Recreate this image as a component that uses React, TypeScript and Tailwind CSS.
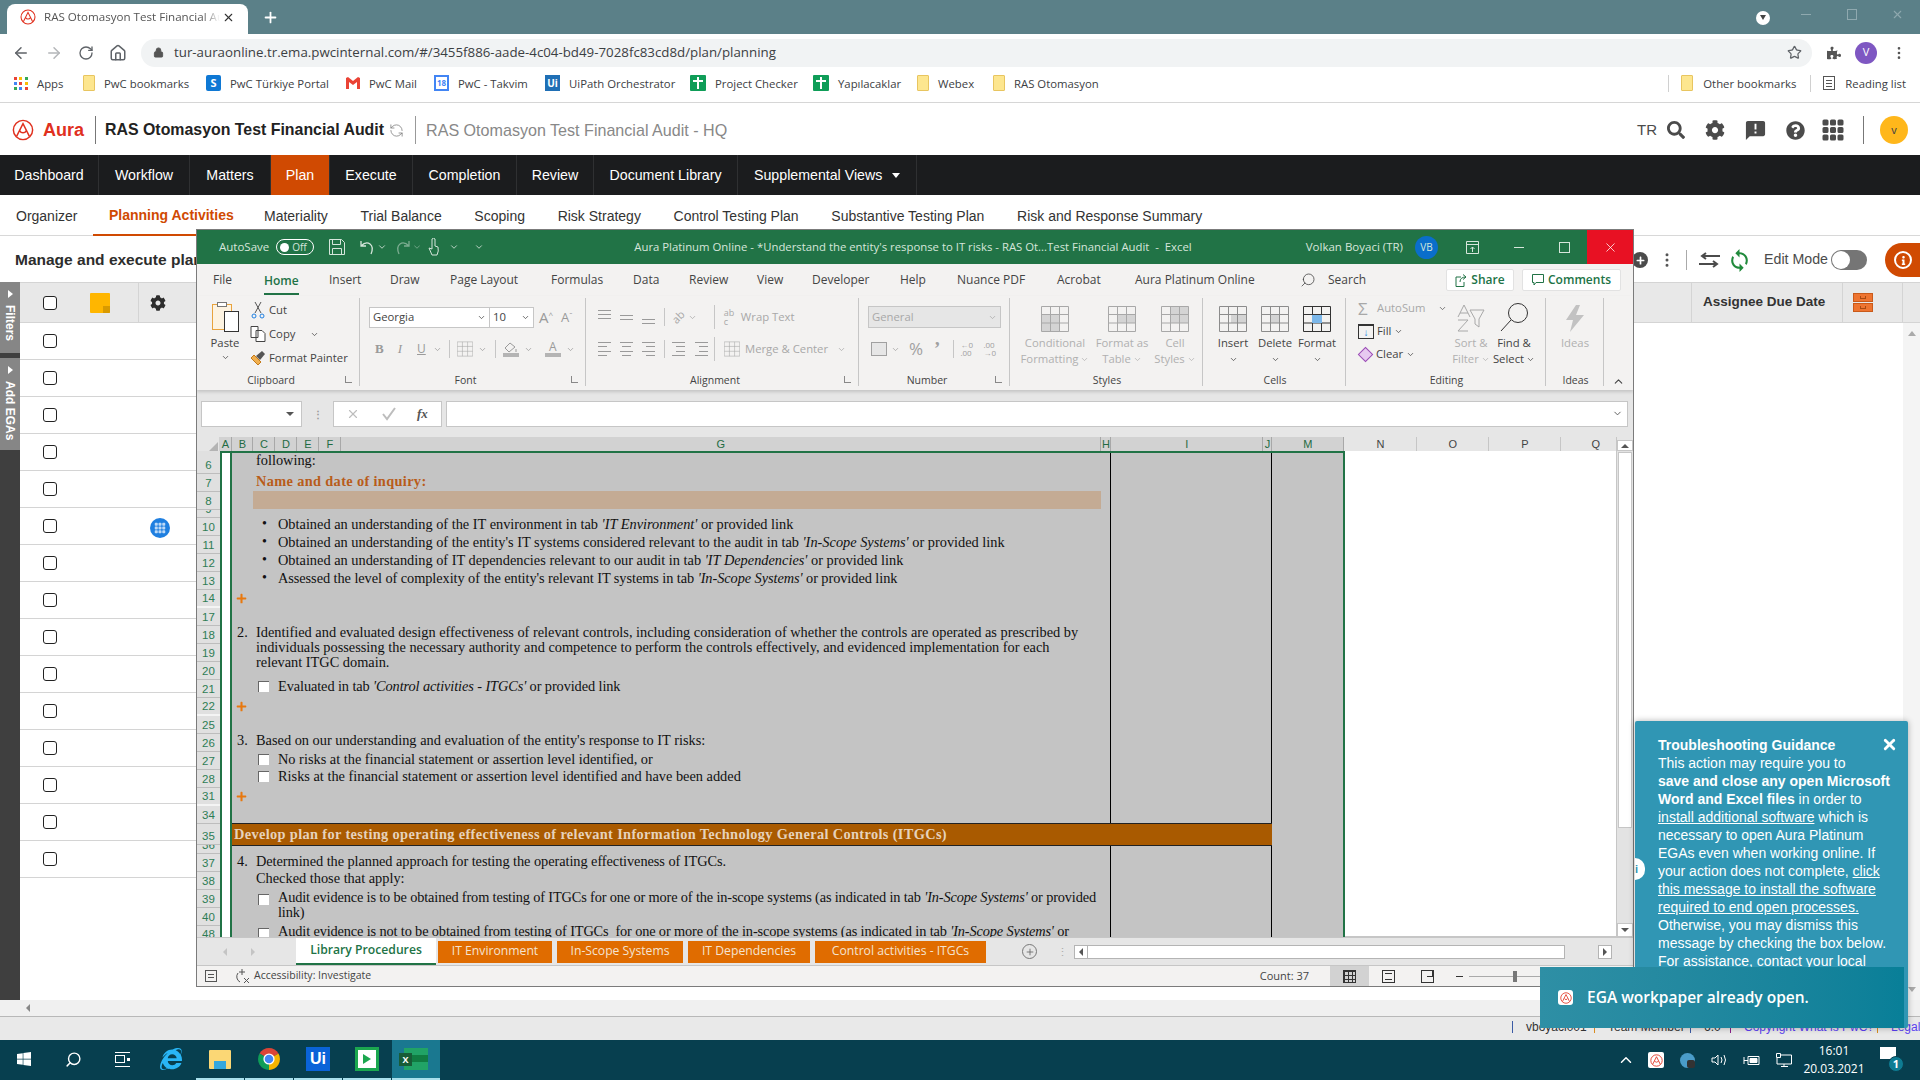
import {
  ArrowLeft,
  ArrowRight,
  ChevronDown,
  ChevronUp,
  Home,
  Lock,
  MoreVertical,
  Plus,
  RefreshCcw,
  RotateCw,
  Search,
  Star,
  X,
} from "lucide-react";
import { BsGrid3X3GapFill } from "react-icons/bs";
import { FaCog, FaInfo, FaInternetExplorer, FaPlus, FaPuzzlePiece, FaQuestionCircle, FaSearch, FaWindows } from "react-icons/fa";
import { MdAnnouncement, MdSync } from "react-icons/md";

function AuraLogo({ size = 16, color = "#e0301e" }: { size?: number; color?: string }) {
  return (
    <svg width={size} height={size} viewBox="0 0 24 24" fill="none" stroke={color} strokeWidth="1.6">
      <circle cx="12" cy="12" r="10.5" />
      <path d="M5 19 12 5l7 14M8.5 13a4 4 0 0 0 7 0" />
    </svg>
  );
}

function Folder() {
  return <div className="w-[12px] h-[16px] bg-[#fde68f] border border-[#e8c560] rounded-[1px]" />;
}

function ChromeIcon() {
  return (
    <svg width="24" height="24" viewBox="0 0 24 24">
      <path d="M12 12 2.5 6.5A11 11 0 0 1 21.5 6.5Z" fill="#db4437" />
      <path d="M12 12 21.5 6.5A11 11 0 0 1 12 23Z" fill="#f4b400" />
      <path d="M12 12 12 23A11 11 0 0 1 2.5 6.5Z" fill="#0f9d58" />
      <circle cx="12" cy="12" r="5.6" fill="#fff" />
      <circle cx="12" cy="12" r="4.3" fill="#4285f4" />
    </svg>
  );
}

function BrowserTabs() {
  return (
    <div className="h-[34px] bg-[#5b8088] flex items-end relative">
      <div className="ml-[7px] w-[241px] h-[30px] bg-white rounded-t-lg flex items-center pl-[13px] pr-[9px] pb-[4px]">
        <AuraLogo size={16} />
        <span className="ml-[8px] w-[176px] overflow-hidden whitespace-nowrap text-[11.6px] text-[#555] [mask-image:linear-gradient(90deg,#000_90%,transparent)]">
          RAS Otomasyon Test Financial Audit
        </span>
        <X size={13} className="ml-[2px] text-[#333]" />
      </div>
      <div className="ml-[14px] h-[30px] flex items-center pb-[4px]">
        <Plus size={17} strokeWidth={2.5} className="text-white" />
      </div>
      <div className="ml-auto h-[34px] flex items-center">
        <div className="w-[14px] h-[14px] rounded-full bg-white flex items-center justify-center mt-[1px]">
          <div className="w-0 h-0 border-x-[3.5px] border-x-transparent border-t-[5px] border-t-[#444]" />
        </div>
        <div className="ml-[31px] w-[10px] h-px bg-[#8fa9af] mb-[6px]" />
        <div className="ml-[36px] w-[10px] h-[11px] border border-[#8fa9af] mb-[6px]" />
        <X size={13} className="ml-[34px] mr-[16px] mb-[6px] text-[#8fa9af]" />
      </div>
    </div>
  );
}

function AddressBar() {
  return (
    <div className="h-[37px] bg-white flex items-center">
      <div className="flex items-center pl-[12px] text-[#5f6368]">
        <ArrowLeft size={18} />
        <ArrowRight size={18} className="ml-[15px] text-[#b4b6b9]" />
        <RotateCw size={16} className="ml-[15px]" />
        <Home size={18} className="ml-[15px]" />
      </div>
      <div className="ml-[14px] w-[1671px] h-[28px] rounded-full bg-[#f1f3f4] flex items-center pl-[12px] pr-[10px]">
        <Lock size={11} className="text-[#555]" fill="#555" />
        <span className="ml-[10px] text-[13.3px] text-[#3c4043] whitespace-nowrap">
          tur-auraonline.tr.ema.pwcinternal.com/#/3455f886-aade-4c04-bd49-7028fc83cd8d/plan/planning
        </span>
        <Star size={15} className="ml-auto text-[#5f6368]" />
      </div>
      <FaPuzzlePiece size={14} className="ml-[15px] text-[#555]" />
      <div className="ml-[14px] w-[22px] h-[22px] rounded-full bg-[#7e57c2] text-white text-[11px] flex items-center justify-center">V</div>
      <MoreVertical size={16} className="ml-[14px] text-[#555]" />
    </div>
  );
}

function BookmarkIcon({ kind }: { kind: string }) {
  if (kind === "apps") {
    const colors = ["#ea4335", "#fbbc05", "#34a853", "#4285f4", "#ea4335", "#fbbc05", "#34a853", "#4285f4", "#ea4335"];
    return (
      <div className="w-[14px] grid grid-cols-3 gap-[2px]">
        {colors.map((c, i) => (
          <div key={i} className="w-[3px] h-[3px]" style={{ background: c }} />
        ))}
      </div>
    );
  }
  if (kind === "folder") return <Folder />;
  if (kind === "sp")
    return <div className="w-[15px] h-[16px] bg-[#0f78d4] rounded-[2px] text-white text-[11px] font-bold leading-[16px] text-center">S</div>;
  if (kind === "gmail")
    return (
      <svg width="14" height="12" viewBox="0 0 14 12">
        <path d="M0 1v11h3V5l4 3 4-3v7h3V1l-2-1-5 4-5-4Z" fill="#ea4335" />
      </svg>
    );
  if (kind === "cal")
    return <div className="w-[15px] h-[16px] bg-white border-2 border-[#4285f4] text-[#4285f4] text-[8px] font-bold leading-[12px] text-center">18</div>;
  if (kind === "ui")
    return <div className="w-[15px] h-[16px] bg-[#1f6fb5] text-white text-[10px] font-bold leading-[16px] text-center">Ui</div>;
  return (
    <div className="w-[16px] h-[16px] bg-[#0f9d58] rounded-[1px] relative flex justify-center">
      <div className="w-[2px] h-[12px] bg-white mt-[2px]" />
      <div className="absolute top-[5px] left-[3px] w-[10px] h-[2px] bg-white" />
    </div>
  );
}

const bookmarks = [
  { kind: "apps", label: "Apps", w: "w-[69px]" },
  { kind: "folder", label: "PwC bookmarks", w: "w-[123px]" },
  { kind: "sp", label: "PwC Türkiye Portal", w: "w-[140px]" },
  { kind: "gmail", label: "PwC Mail", w: "w-[88px]" },
  { kind: "cal", label: "PwC - Takvim", w: "w-[111px]" },
  { kind: "ui", label: "UiPath Orchestrator", w: "w-[145px]" },
  { kind: "plus", label: "Project Checker", w: "w-[123px]" },
  { kind: "plus", label: "Yapılacaklar", w: "w-[104px]" },
  { kind: "folder", label: "Webex", w: "w-[76px]" },
  { kind: "folder", label: "RAS Otomasyon", w: "w-[120px]" },
];

function BookmarksBar() {
  return (
    <div className="h-[32px] bg-white border-b border-[#d6d6d6] flex items-center pl-[14px] pb-[6px] text-[11.35px] text-[#3c4043]">
      {bookmarks.map((b) => (
        <div key={b.label} className={`${b.w} flex items-center gap-[9px] shrink-0`}>
          <BookmarkIcon kind={b.kind} />
          <span className="whitespace-nowrap">{b.label}</span>
        </div>
      ))}
      <div className="ml-auto flex items-center">
        <div className="w-px h-[17px] bg-[#d0d0d0] mr-[12px]" />
        <Folder />
        <span className="ml-[10px] w-[93px] whitespace-nowrap">Other bookmarks</span>
        <div className="w-px h-[17px] bg-[#d0d0d0] ml-[14px] mr-[12px]" />
        <div className="w-[12px] h-[14px] border border-[#555] flex flex-col justify-evenly px-[2px]">
          <div className="h-px bg-[#555]" />
          <div className="h-px bg-[#555]" />
          <div className="h-px bg-[#555]" />
        </div>
        <span className="ml-[10px] mr-[14px] whitespace-nowrap">Reading list</span>
      </div>
    </div>
  );
}

function AuraHeader() {
  return (
    <div className="h-[52px] bg-white flex items-center pt-[2px] font-['Liberation_Sans',sans-serif]">
      <div className="pl-[12px]">
        <AuraLogo size={22} />
      </div>
      <span className="ml-[9px] text-[18px] font-bold text-[#e0301e]">Aura</span>
      <div className="ml-[11px] w-px h-[28px] bg-[#777]" />
      <span className="ml-[9px] text-[15.9px] font-bold text-[#222] whitespace-nowrap">RAS Otomasyon Test Financial Audit</span>
      <RefreshCcw size={15} strokeWidth={1.2} className="ml-[5px] text-[#777]" />
      <div className="ml-[11px] w-px h-[28px] bg-[#999]" />
      <span className="ml-[10px] text-[16.1px] text-[#888] whitespace-nowrap">RAS Otomasyon Test Financial Audit - HQ</span>
      <div className="ml-auto flex items-center text-[#4b4b4b]">
        <span className="text-[15px]">TR</span>
        <FaSearch size={18} className="ml-[10px]" />
        <FaCog size={20} className="ml-[20px]" />
        <MdAnnouncement size={23} className="ml-[19px]" />
        <FaQuestionCircle size={19} className="ml-[19px]" />
        <BsGrid3X3GapFill size={24} className="ml-[16px]" />
        <div className="ml-[18px] w-px h-[28px] bg-[#777]" />
        <div className="ml-[16px] mr-[12px] w-[28px] h-[28px] rounded-full bg-[#ffb71b] text-[#444] text-[11px] flex items-center justify-center">v</div>
      </div>
    </div>
  );
}

const navItems = [
  { label: "Dashboard", w: "w-[99px]" },
  { label: "Workflow", w: "w-[91px]" },
  { label: "Matters", w: "w-[81px]" },
  { label: "Plan", w: "w-[59px]" },
  { label: "Execute", w: "w-[83px]" },
  { label: "Completion", w: "w-[104px]" },
  { label: "Review", w: "w-[77px]" },
  { label: "Document Library", w: "w-[144px]" },
];

function MainNav() {
  return (
    <div className="h-[40px] bg-[#1b1c1e] flex text-white text-[14.2px] font-['Liberation_Sans',sans-serif]">
      {navItems.map((n) => (
        <div
          key={n.label}
          className={`${n.w} flex items-center justify-center pt-[1px] border-r border-[#2f3032] ${n.label === "Plan" ? "bg-[#d04a02]" : ""}`}
        >
          {n.label}
        </div>
      ))}
      <div className="w-[179px] flex items-center pl-[16px] pt-[1px] border-r border-[#2f3032]">
        Supplemental Views
        <div className="ml-[10px] w-0 h-0 border-x-[4px] border-x-transparent border-t-[5px] border-t-white" />
      </div>
    </div>
  );
}

function SubNav() {
  const items = ["Materiality", "Trial Balance", "Scoping", "Risk Strategy", "Control Testing Plan", "Substantive Testing Plan", "Risk and Response Summary"];
  return (
    <div className="h-[41px] flex text-[14px] text-[#333] font-['Liberation_Sans',sans-serif] border-b border-[#d8d8d8]">
      <div className="pl-[16px] w-[93px] flex items-center pt-[2px]">Organizer</div>
      <div className="w-[171px] pl-[16px] flex items-center pt-[2px] font-bold text-[#d04a02] border-b-2 border-[#d04a02] h-[41px] whitespace-nowrap">
        Planning Activities
      </div>
      {items.map((i) => (
        <div key={i} className="mr-[32px] pr-[0.7px] flex items-center pt-[2px] whitespace-nowrap">
          {i}
        </div>
      ))}
    </div>
  );
}

function PageCheckbox() {
  return <div className="w-[14px] h-[14px] rounded-[3px] border border-[#222] bg-white" />;
}

function PageBody() {
  const rows = Array.from({ length: 15 }, (_, i) => i);
  return (
    <div className="h-[780px] flex flex-col font-['Liberation_Sans',sans-serif]">
      <div className="h-[46px] flex items-center shrink-0 pt-[2px]">
        <span className="pl-[15px] text-[15.5px] font-bold text-[#2d2d2d] whitespace-nowrap w-[196px]">Manage and execute planning activities</span>
        <div className="ml-auto flex items-center text-[#555]">
          <div className="w-[16px] h-[16px] rounded-full bg-[#4b4b4b] flex items-center justify-center">
            <FaPlus size={9} className="text-white" />
          </div>
          <MoreVertical size={18} className="ml-[10px]" />
          <div className="ml-[10px] w-px h-[20px] bg-[#aaa]" />
          <svg width="21" height="16" viewBox="0 0 21 16" className="ml-[12px]" fill="none" stroke="#4b4b4b" strokeWidth="2">
            <path d="M21 4H3m4-3L3 4l4 3M0 12h18m-4-3 4 3-4 3" />
          </svg>
          <MdSync size={25} className="ml-[7px] text-[#218a3c]" />
          <span className="ml-[12px] text-[14.2px] text-[#4b4b4b]">Edit Mode</span>
          <div className="ml-[3px] w-[36px] h-[20px] rounded-full bg-[#757575] flex items-center p-px">
            <div className="w-[18px] h-[18px] rounded-full bg-white" />
          </div>
          <div className="ml-[18px] w-[35px] h-[34px] rounded-l-full bg-[#d04a02] flex items-center pl-[9px]">
            <div className="w-[18px] h-[18px] rounded-full border-2 border-white flex items-center justify-center">
              <FaInfo size={9} className="text-white" />
            </div>
          </div>
        </div>
      </div>
      <div className="flex-1 flex min-h-0">
        <div className="w-[20px] bg-[#3f3f3f] flex flex-col text-white shrink-0">
          <div className="h-[71px] bg-[#868686] flex flex-col items-center pt-[8px]">
            <div className="w-0 h-0 border-y-[4px] border-y-transparent border-l-[5px] border-l-white" />
            <span className="mt-[7px] [writing-mode:vertical-rl] text-[12px] font-bold">Filters</span>
          </div>
          <div className="mt-[5px] h-[92px] bg-[#868686] flex flex-col items-center pt-[8px]">
            <div className="w-0 h-0 border-y-[4px] border-y-transparent border-l-[5px] border-l-white" />
            <span className="mt-[7px] [writing-mode:vertical-rl] text-[12px] font-bold whitespace-nowrap">Add EGAs</span>
          </div>
        </div>
        <div className="flex-1 flex flex-col min-w-0">
          <div className="h-[41px] bg-[#e8e8e8] border-y border-[#d4d4d4] flex items-center shrink-0">
            <div className="w-[118px] flex items-center pl-[23px]">
              <PageCheckbox />
              <div className="ml-[33px] w-[20px] h-[20px] bg-[#ffb600] rounded-[1px] relative overflow-hidden">
                <div className="absolute right-0 bottom-0 w-[7px] h-[7px] bg-[#d99a00]" />
              </div>
            </div>
            <div className="h-full border-l border-[#d4d4d4] pl-[11px] flex items-center">
              <FaCog size={16} className="text-[#2d2d2d]" />
            </div>
            <div className="ml-auto h-full w-[151px] border-l border-[#d4d4d4] flex items-center pl-[11px] text-[13.5px] font-bold text-[#333] whitespace-nowrap">
              Assignee Due Date
            </div>
            <div className="h-full w-[60px] border-l border-[#d4d4d4] flex flex-col gap-px justify-center pl-[10px]">
              <div className="w-[20px] h-[9px] bg-[#ee7430] border border-[#c95a1a] flex justify-center">
                <div className="w-[6px] h-[3px] mt-[2px] border-b border-x border-[#a84a12]" />
              </div>
              <div className="w-[20px] h-[9px] bg-[#ee7430] border border-[#c95a1a] flex justify-center">
                <div className="w-[6px] h-[3px] mt-[2px] border-b border-x border-[#a84a12]" />
              </div>
            </div>
            <div className="h-full w-[18px] border-l border-[#d4d4d4]" />
          </div>
          <div className="flex-1 flex min-h-0">
            <div className="w-[176px]">
              {rows.map((r) => (
                <div key={r} className="h-[37px] border-b border-[#d4d4d4] flex items-center pl-[23px] relative">
                  <PageCheckbox />
                  {r === 5 && (
                    <div className="absolute left-[130px] top-[10px] w-[20px] h-[20px] rounded-full bg-[#1f7fe0] flex items-center justify-center">
                      <BsGrid3X3GapFill size={12} className="text-[#bcd9f7]" />
                    </div>
                  )}
                </div>
              ))}
            </div>
            <div className="ml-auto w-[17px] bg-[#f4f4f4] flex flex-col justify-between items-center py-[8px]">
              <div className="w-0 h-0 border-x-[4px] border-x-transparent border-b-[5px] border-b-[#aaa]" />
              <div className="w-0 h-0 border-x-[4px] border-x-transparent border-t-[5px] border-t-[#aaa]" />
            </div>
          </div>
        </div>
      </div>
      <div className="h-[16px] bg-[#f0f0f0] flex items-center shrink-0 pl-[26px]">
        <div className="w-0 h-0 border-y-[4px] border-y-transparent border-r-[4px] border-r-[#888]" />
      </div>
    </div>
  );
}

function Footer() {
  const items = [
    { sep: "bg-[#3b5ba5]", text: "vboyaci001", w: "w-[82px]", color: "text-[#333]" },
    { sep: "bg-[#d98c20]", text: "Team Member", w: "w-[96px]", color: "text-[#333]" },
    { sep: "bg-[#3b5ba5]", text: "6.0", w: "w-[40px]", color: "text-[#333]" },
    { sep: "bg-[#8a1f8a]", text: "Copyright What is PwC?", w: "w-[147px]", color: "text-[#5b3ff0]" },
    { sep: "bg-[#d98c20]", text: "Legal", w: "w-[43px]", color: "text-[#5b3ff0]" },
  ];
  return (
    <div className="h-[24px] bg-[#e9e9e9] border-t border-[#b8b8b8] flex items-center justify-end text-[12px] font-['Liberation_Sans',sans-serif]">
      {items.map((f) => (
        <div key={f.text} className={`${f.w} flex items-center mb-[3px] whitespace-nowrap`}>
          <div className={`${f.sep} w-px h-[12px] mr-[13px] shrink-0`} />
          <span className={f.color}>{f.text}</span>
        </div>
      ))}
    </div>
  );
}

function TaskSlot({ active, line, children }: { active?: boolean; line?: boolean; children: React.ReactNode }) {
  return (
    <div
      className={`w-[48px] h-[40px] flex items-center justify-center mr-px border-b-2 ${active ? "bg-[#1a7890]" : ""} ${line ? "border-[#a9e0ec]" : "border-transparent"}`}
    >
      {children}
    </div>
  );
}

function Taskbar() {
  return (
    <div className="h-[40px] bg-[#073f4f] flex items-center text-white">
      <TaskSlot>
        <FaWindows size={16} />
      </TaskSlot>
      <TaskSlot>
        <Search size={17} className="-scale-x-100" />
      </TaskSlot>
      <TaskSlot>
        <div className="w-[15px] h-[15px] border-y border-white flex items-center justify-start">
          <div className="w-[10px] h-[8px] border border-white" />
          <div className="ml-[2px] w-[3px] h-[3px] bg-white" />
        </div>
      </TaskSlot>
      <TaskSlot>
        <FaInternetExplorer size={22} className="text-[#29b6f6]" />
      </TaskSlot>
      <TaskSlot line>
        <div className="w-[22px] h-[19px] bg-[#fbd775] rounded-[1px] flex items-end justify-center">
          <div className="w-[12px] h-[8px] bg-[#35a7dd]" />
        </div>
      </TaskSlot>
      <TaskSlot line>
        <ChromeIcon />
      </TaskSlot>
      <TaskSlot line>
        <div className="w-[24px] h-[24px] bg-[#0a63d8] text-white text-[16px] font-bold leading-[24px] text-center font-['Liberation_Sans',sans-serif]">Ui</div>
      </TaskSlot>
      <TaskSlot line>
        <div className="w-[24px] h-[24px] bg-[#1ba74f] flex items-center justify-center">
          <div className="w-[18px] h-[18px] bg-white flex items-center justify-center">
            <div className="w-0 h-0 border-y-[5px] border-y-transparent border-l-[8px] border-l-[#1ba74f]" />
          </div>
        </div>
      </TaskSlot>
      <TaskSlot active line>
        <div className="w-[24px] h-[22px] bg-[#21a366] relative">
          <div className="absolute left-[8px] top-[7px] w-[16px] h-[7px] bg-[#107c41]" />
          <div className="absolute -left-[5px] top-[5px] w-[13px] h-[13px] bg-[#185c37] text-white text-[9px] font-bold leading-[13px] text-center">X</div>
        </div>
      </TaskSlot>
      <div className="ml-auto flex items-center">
        <ChevronUp size={18} className="mr-[13px]" />
        <div className="w-[16px] h-[16px] bg-white rounded-[2px] flex items-center justify-center">
          <AuraLogo size={13} />
        </div>
        <div className="ml-[16px] w-[15px] h-[15px] rounded-full bg-[#4a9cc9] flex items-end justify-end">
          <div className="w-[8px] h-[8px] rounded-[2px] bg-[#333]" />
        </div>
        <svg width="17" height="14" viewBox="0 0 17 14" className="ml-[16px]" fill="none" stroke="#fff">
          <path d="M1 5h3l3-3v10L4 9H1ZM10 4q2 3 0 6M13 2q3 5 0 10" />
        </svg>
        <svg width="17" height="12" viewBox="0 0 17 12" className="ml-[15px]" fill="none" stroke="#fff">
          <path d="M5 2.500h11v8H5ZM5 6.500H1M1 3v7" />
          <path d="M7 4.500h7v4H7Z" fill="#fff" />
        </svg>
        <svg width="16" height="14" viewBox="0 0 16 14" className="ml-[16px]" fill="none" stroke="#fff">
          <path d="M.5.5h4v4h-4ZM5 2h10.5v9H1V5M8 11v2M5 13.500h7" />
        </svg>
        <div className="ml-[2px] w-[80px] flex flex-col items-center text-[12px] leading-[18px] font-['Open_Sans',sans-serif]">
          <span>16:01</span>
          <span>20.03.2021</span>
        </div>
        <div className="ml-[6px] mr-[17px] w-[23px] h-[28px] relative">
          <div className="absolute left-0 top-[1px] w-[16px] h-[12px] bg-white" />
          <div className="absolute left-[8px] top-[10px] w-[16px] h-[16px] rounded-full bg-[#0e7c93] border border-[#073f4f] text-[11px] font-bold leading-[14px] text-center">1</div>
        </div>
      </div>
    </div>
  );
}

/* ---------- Excel ---------- */

function TitleBar() {
  const t = "text-[#d6e6db]";
  return (
    <div className={`h-[34px] bg-[#217346] flex items-center text-[11.5px] ${t} shrink-0`}>
      <span className="ml-[22px]">AutoSave</span>
      <div className="ml-[7px] w-[38px] h-[16px] rounded-full border border-white flex items-center px-[3px] gap-[3px]">
        <div className="w-[9px] h-[9px] rounded-full bg-white" />
        <span className="text-[10px] leading-none">Off</span>
      </div>
      <svg width="16" height="16" viewBox="0 0 16 16" className="ml-[15px]" fill="none" stroke="#d6e6db">
        <path d="M.5.5h12l3 3v12H.5ZM3.500.5v5h8v-5M3.500 15.500v-6h9v6" />
      </svg>
      <svg width="15" height="15" viewBox="0 0 15 15" className="ml-[15px]" fill="none" stroke="#d6e6db" strokeWidth="1.3">
        <path d="M1 1v5h5M1 6q5-5 9-2t1 10" />
      </svg>
      <ChevronDown size={10} className="ml-[2px]" />
      <svg width="15" height="15" viewBox="0 0 15 15" className="ml-[8px] opacity-50" fill="none" stroke="#d6e6db" strokeWidth="1.3">
        <path d="M14 1v5H9M14 6Q9 1 5 4t-1 10" />
      </svg>
      <ChevronDown size={10} className="ml-[2px] opacity-50" />
      <svg width="13" height="18" viewBox="0 0 13 18" className="ml-[5px]" fill="none" stroke="#d6e6db">
        <path d="M5 1a2 2 0 0 1 3 0v7l3 1q1 4-1 8H5L2 10l3 1Z" />
      </svg>
      <ChevronDown size={10} className="ml-[9px]" />
      <ChevronDown size={10} className="ml-[15px]" />
      <span className="ml-[150px] whitespace-nowrap text-[11.35px]">
        Aura Platinum Online - *Understand the entity's response to IT risks - RAS Ot...Test Financial Audit&nbsp; -&nbsp; Excel
      </span>
      <div className="ml-auto flex items-center h-full">
        <span className="whitespace-nowrap">Volkan Boyaci (TR)</span>
        <div className="ml-[12px] w-[23px] h-[23px] rounded-full bg-[#0a6ecb] text-[10px] flex items-center justify-center">VB</div>
        <svg width="13" height="13" viewBox="0 0 13 13" className="ml-[28px]" fill="none" stroke="#d6e6db">
          <path d="M.5.5h12v12H.5ZM.5 3.500h12M6.500 11V6M4.500 8l2-2 2 2" />
        </svg>
        <div className="ml-[35px] w-[10px] h-px bg-[#d6e6db]" />
        <div className="ml-[35px] w-[11px] h-[11px] border border-[#d6e6db]" />
        <div className="ml-[17px] w-[46px] h-full bg-[#e81123] flex items-center justify-center">
          <X size={15} strokeWidth={1.2} className="text-white" />
        </div>
      </div>
    </div>
  );
}

const ribbonTabs = [
  { label: "File", w: "w-[51px]" },
  { label: "Home", w: "w-[65px]" },
  { label: "Insert", w: "w-[61px]" },
  { label: "Draw", w: "w-[60px]" },
  { label: "Page Layout", w: "w-[101px]" },
  { label: "Formulas", w: "w-[82px]" },
  { label: "Data", w: "w-[56px]" },
  { label: "Review", w: "w-[68px]" },
  { label: "View", w: "w-[55px]" },
  { label: "Developer", w: "w-[88px]" },
  { label: "Help", w: "w-[57px]" },
  { label: "Nuance PDF", w: "w-[100px]" },
  { label: "Acrobat", w: "w-[78px]" },
  { label: "Aura Platinum Online", w: "w-[165px]" },
];

function RibbonTabs() {
  return (
    <div className="h-[32px] flex items-center pl-[16px] text-[12px] text-[#444] shrink-0">
      {ribbonTabs.map((t) => (
        <div key={t.label} className={`${t.w} h-full flex items-center relative whitespace-nowrap`}>
          <span className={t.label === "Home" ? "font-semibold text-[#217346] border-b-[2px] border-[#217346] h-[26px] leading-[24px] mt-[3px]" : ""}>{t.label}</span>
        </div>
      ))}
      <Search size={16} strokeWidth={1.2} className="text-[#444] -scale-x-100" />
      <span className="ml-[12px]">Search</span>
      <div className="ml-auto mr-[12px] flex gap-[8px] text-[#217346] font-semibold">
        <div className="w-[68px] h-[22px] bg-white border border-[#e2e2e2] rounded-[2px] flex items-center justify-center gap-[4px]">
          <svg width="12" height="13" viewBox="0 0 12 13" fill="none" stroke="#217346">
            <path d="M6 3H1v9.500h8V8M5 8q0-5 6-5L8 .5M11 3 8 5.500" />
          </svg>
          Share
        </div>
        <div className="w-[99px] h-[22px] bg-white border border-[#e2e2e2] rounded-[2px] flex items-center justify-center gap-[4px]">
          <svg width="12" height="12" viewBox="0 0 12 12" fill="none" stroke="#217346">
            <path d="M.5.5h11v8H4L2 11V8.500H.5Z" />
          </svg>
          Comments
        </div>
      </div>
    </div>
  );
}

function Chev({ className = "" }: { className?: string }) {
  return <ChevronDown size={9} strokeWidth={2} className={className} />;
}

function Group({ w, label, launcher, children }: { w: string; label: string; launcher?: boolean; children: React.ReactNode }) {
  return (
    <div className={`${w} shrink-0 h-[88px] mt-[2px] border-r border-[#c6c6c6] flex flex-col`}>
      <div className="h-[76px]">{children}</div>
      <div className={`relative mt-[2px] text-center text-[10.5px] leading-[12px] text-[#444] ${launcher ? "pr-[14px]" : "pl-[2px]"}`}>
        {label}
        {launcher && <div className="absolute right-[7px] top-[2px] w-[7px] h-[7px] border-l border-b border-[#888]" />}
      </div>
    </div>
  );
}

function Lines({ widths, align = "items-start", justify = "justify-between" }: { widths: string[]; align?: string; justify?: string }) {
  return (
    <div className={`w-[13px] h-[14px] flex flex-col gap-[3px] ${align} ${justify}`}>
      {widths.map((w, i) => (
        <div key={i} className={`${w} h-px bg-[#9a9a9a]`} />
      ))}
    </div>
  );
}

function GridIcon({ tint, big, shade }: { tint?: string; big?: boolean; shade?: string }) {
  return (
    <svg width={big ? 28 : 16} height={big ? 26 : 16} viewBox="0 0 28 26" fill="none" stroke={tint ?? "#a8a8a8"}>
      {shade && <path d={shade} fill="#d4d4d4" stroke="none" />}
      <path d="M.5.5h27v25H.5ZM.5 8.500h27M.5 17h27M9.500.5v25M18.500.5v25" />
    </svg>
  );
}

function BigButton({ w, icon, lines, grey, chevLine }: { w: string; icon: React.ReactNode; lines: string[]; grey?: boolean; chevLine?: boolean }) {
  return (
    <div className={`${w} shrink-0 flex flex-col items-center pt-[6px] text-[11.3px] leading-[16px] ${grey ? "text-[#b0b0b0]" : "text-[#444]"}`}>
      <div className="h-[28px] flex items-end justify-center">{icon}</div>
      <div className="mt-[3px] whitespace-nowrap">{lines[0]}</div>
      <div className="whitespace-nowrap flex items-center gap-[2px] h-[16px]">
        {lines[1]}
        {chevLine && <Chev />}
      </div>
    </div>
  );
}

function Ribbon() {
  return (
    <div className="h-[94px] flex text-[11.3px] text-[#444] shrink-0 shadow-[0_2px_3px_rgba(0,0,0,0.15)] relative">
      <Group w="w-[163px]" label="Clipboard" launcher>
        <div className="flex">
          <div className="ml-[3px] w-[50px] flex flex-col items-center pt-[4px]">
            <div className="w-[27px] h-[30px] relative">
              <div className="absolute left-0 top-[2px] w-[20px] h-[26px] border border-[#e8a33d] bg-[#fdf3e1]" />
              <div className="absolute left-[5px] top-0 w-[10px] h-[5px] border border-[#777] bg-white" />
              <div className="absolute right-0 top-[9px] w-[15px] h-[21px] border border-[#333] bg-white" />
            </div>
            <span className="mt-[3px] leading-[16px]">Paste</span>
            <Chev className="mt-[2px]" />
          </div>
          <div className="flex flex-col">
            <div className="h-[24px] flex items-center">
              <svg width="16" height="18" viewBox="0 0 16 18" fill="none" stroke="#555">
                <path d="M5 1l6 11M11 1 5 12" />
                <circle cx="4" cy="15" r="2" stroke="#1f7fe0" />
                <circle cx="12" cy="15" r="2" stroke="#1f7fe0" />
              </svg>
              <span className="ml-[3px]">Cut</span>
            </div>
            <div className="h-[24px] flex items-center">
              <svg width="16" height="16" viewBox="0 0 16 16" fill="none" stroke="#444">
                <path d="M1 .5h7v11H1ZM6 4.500h6l3 3v8H6Z" fill="#fff" />
              </svg>
              <span className="ml-[3px]">Copy</span>
              <Chev className="ml-[15px]" />
            </div>
            <div className="h-[24px] flex items-center">
              <svg width="16" height="16" viewBox="0 0 16 16">
                <path d="M1 8l7 7 3-3-7-7Z" fill="#f0b050" stroke="#c47a1a" />
                <path d="M6 6l6-5 3 3-5 6Z" fill="#555" />
              </svg>
              <span className="ml-[3px] whitespace-nowrap">Format Painter</span>
            </div>
          </div>
        </div>
      </Group>
      <Group w="w-[226px]" label="Font" launcher>
        <div className="pl-[9px] pt-[9px] flex items-center h-[30px]">
          <div className="w-[121px] h-[21px] bg-white border border-[#c6c6c6] flex items-center pl-[3px] pr-[3px]">
            Georgia
            <Chev className="ml-auto" />
          </div>
          <div className="w-[44px] h-[21px] bg-white border border-l-0 border-[#c6c6c6] flex items-center pl-[3px] pr-[3px]">
            10
            <Chev className="ml-auto" />
          </div>
          <span className="ml-[5px] text-[15px] text-[#9a9a9a]">A</span>
          <span className="text-[8px] text-[#9a9a9a] mb-[6px]">^</span>
          <span className="ml-[8px] text-[13px] text-[#9a9a9a]">A</span>
          <span className="text-[8px] text-[#9a9a9a] mb-[6px]">ˇ</span>
        </div>
        <div className="mt-[10px] h-[22px] pl-[15px] flex items-center text-[#9a9a9a]">
          <span className="font-bold text-[13px] font-['Liberation_Serif',serif]">B</span>
          <span className="ml-[14px] italic text-[13px] font-['Liberation_Serif',serif]">I</span>
          <span className="ml-[15px] underline text-[12px]">U</span>
          <Chev className="ml-[7px]" />
          <div className="ml-[7px] w-px h-[18px] bg-[#c6c6c6]" />
          <div className="ml-[7px]">
            <GridIcon />
          </div>
          <Chev className="ml-[5px]" />
          <div className="ml-[8px] w-px h-[18px] bg-[#c6c6c6]" />
          <div className="ml-[7px] flex flex-col items-center">
            <svg width="14" height="11" viewBox="0 0 14 11" fill="none" stroke="#9a9a9a">
              <path d="M6 1 1 6l4 4 6-5ZM12 7v3" />
            </svg>
            <div className="w-[16px] h-[4px] bg-[#b4b4b4]" />
          </div>
          <Chev className="ml-[5px]" />
          <div className="ml-[12px] flex flex-col items-center leading-[12px]">
            <span className="text-[12px]">A</span>
            <div className="w-[16px] h-[4px] bg-[#b4b4b4]" />
          </div>
          <Chev className="ml-[5px]" />
        </div>
      </Group>
      <Group w="w-[273px]" label="Alignment" launcher>
        <div className="pl-[12px] pt-[8px] h-[30px] flex items-center text-[#a8a8a8]">
          <div className="flex gap-[9px]">
            <Lines widths={["w-[13px]", "w-[13px]", "w-[13px]"]} justify="justify-start" />
            <Lines widths={["w-[13px]", "w-[13px]"]} justify="justify-center" />
            <Lines widths={["w-[13px]", "w-[13px]"]} justify="justify-end" />
          </div>
          <div className="ml-[9px] w-px h-[18px] bg-[#c6c6c6]" />
          <span className="ml-[7px] text-[11px] -rotate-45 inline-block">ab</span>
          <Chev className="ml-[3px]" />
          <div className="ml-[17px] w-px h-[24px] bg-[#c6c6c6]" />
          <span className="ml-[9px] text-[9px] leading-[9px] w-[15px]">ab c</span>
          <span className="ml-[2px]">Wrap Text</span>
        </div>
        <div className="mt-[10px] pl-[12px] h-[22px] flex items-center text-[#a8a8a8]">
          <div className="flex gap-[9px]">
            <Lines widths={["w-[13px]", "w-[9px]", "w-[13px]", "w-[9px]"]} />
            <Lines widths={["w-[13px]", "w-[9px]", "w-[13px]", "w-[9px]"]} align="items-center" />
            <Lines widths={["w-[13px]", "w-[9px]", "w-[13px]", "w-[9px]"]} align="items-end" />
          </div>
          <div className="ml-[9px] w-px h-[18px] bg-[#c6c6c6]" />
          <div className="ml-[7px] flex gap-[10px]">
            <Lines widths={["w-[13px]", "w-[9px]", "w-[9px]", "w-[13px]"]} align="items-end" />
            <Lines widths={["w-[13px]", "w-[9px]", "w-[9px]", "w-[13px]"]} align="items-end" />
          </div>
          <div className="ml-[6px] w-px h-[24px] bg-[#c6c6c6]" />
          <div className="ml-[9px]">
            <GridIcon />
          </div>
          <span className="ml-[5px] whitespace-nowrap">Merge &amp; Center</span>
          <Chev className="ml-[9px]" />
        </div>
      </Group>
      <Group w="w-[151px]" label="Number" launcher>
        <div className="ml-[9px] mt-[8px] w-[133px] h-[22px] bg-[#e6e6e6] border border-[#c6c6c6] flex items-center pl-[3px] pr-[3px] text-[#a8a8a8]">
          General
          <Chev className="ml-auto" />
        </div>
        <div className="mt-[10px] pl-[12px] h-[22px] flex items-center text-[#a0a0a0]">
          <div className="w-[16px] h-[14px] border border-[#a0a0a0] bg-[#e6e6e6]" />
          <Chev className="ml-[4px]" />
          <span className="ml-[9px] text-[17px]">%</span>
          <span className="ml-[11px] text-[19px] leading-[12px] font-bold font-['Liberation_Serif',serif]">’</span>
          <div className="ml-[13px] w-px h-[18px] bg-[#c6c6c6]" />
          <span className="ml-[6px] text-[8px] leading-[8px] w-[17px]">←0 .00</span>
          <span className="ml-[6px] text-[8px] leading-[8px] w-[17px]">.00 →0</span>
        </div>
      </Group>
      <Group w="w-[193px]" label="Styles">
        <div className="flex pl-[10px]">
          <BigButton w="w-[70px]" grey chevLine icon={<GridIcon big shade="M0 8.500h18.500V25H0Z" />} lines={["Conditional", "Formatting"]} />
          <BigButton w="w-[64px]" grey chevLine icon={<GridIcon big shade="M9.500 8.500h18V17h-18Z" />} lines={["Format as", "Table"]} />
          <BigButton w="w-[42px]" grey chevLine icon={<GridIcon big shade="M9.500 0h18v17h-18Z" />} lines={["Cell", "Styles"]} />
        </div>
      </Group>
      <Group w="w-[143px]" label="Cells">
        <div className="flex pl-[9px]">
          <BigButton w="w-[42px]" chevLine icon={<GridIcon big tint="#8c8c8c" shade="M12 8.500h15.500V17H12Z" />} lines={["Insert", ""]} />
          <BigButton w="w-[42px]" chevLine icon={<GridIcon big tint="#8c8c8c" shade="M9.500 8.500h9V17h-9Z" />} lines={["Delete", ""]} />
          <BigButton
            w="w-[42px]"
            chevLine
            icon={
              <div className="relative">
                <GridIcon big tint="#333" />
                <div className="absolute left-[9px] top-[9px] w-[10px] h-[8px] bg-[#7bb7ea]" />
              </div>
            }
            lines={["Format", ""]}
          />
        </div>
      </Group>
      <Group w="w-[200px]" label="Editing">
        <div className="flex pl-[12px]">
          <div className="w-[93px] flex flex-col -mt-[1px]">
            <div className="h-[23px] flex items-center text-[#a8a8a8]">
              <span className="text-[17px] w-[16px]">Σ</span>
              <span className="ml-[3px]">AutoSum</span>
              <Chev className="ml-[13px] text-[#555]" />
            </div>
            <div className="h-[23px] flex items-center">
              <div className="w-[16px] h-[15px] border border-[#333] border-t-2 flex items-center justify-center text-[#1f7fe0] text-[10px] leading-none">↓</div>
              <span className="ml-[3px]">Fill</span>
              <Chev className="ml-[3px]" />
            </div>
            <div className="h-[23px] flex items-center">
              <div className="ml-[2px] w-[11px] h-[11px] rotate-45 bg-[#e7c9f0] border border-[#9b4fb5]" />
              <span className="ml-[5px]">Clear</span>
              <Chev className="ml-[3px]" />
            </div>
          </div>
          <BigButton
            w="w-[40px]"
            grey
            chevLine
            icon={
              <svg width="28" height="28" viewBox="0 0 28 28" fill="none" stroke="#a8a8a8">
                <path d="M13 13 7 1 1 13M3 9h8M1 16h10L1 27h10M13 6h14l-5 9v8l-4-3v-5Z" />
              </svg>
            }
            lines={["Sort &", "Filter"]}
          />
          <BigButton
            w="w-[46px]"
            chevLine
            icon={
              <svg width="30" height="30" viewBox="0 0 30 30" fill="none" stroke="#333">
                <circle cx="19" cy="11" r="9.500" />
                <path d="M12 18 2 29" />
              </svg>
            }
            lines={["Find &", "Select"]}
          />
        </div>
      </Group>
      <Group w="w-[58px]" label="Ideas">
        <BigButton
          w="w-[58px]"
          grey
          icon={
            <svg width="20" height="27" viewBox="0 0 20 27" fill="#c2c2c2">
              <path d="M11 0 1 15h7l-3 12L19 10h-8l4-10Z" />
            </svg>
          }
          lines={["Ideas", ""]}
        />
      </Group>
      <div className="flex-1 flex items-end justify-end pr-[8px] pb-[2px]">
        <ChevronUp size={13} />
      </div>
    </div>
  );
}

function FormulaBar() {
  return (
    <div className="h-[47px] bg-[#e6e6e6] flex items-center shrink-0 pl-[4px] pr-[5px]">
      <div className="w-[101px] h-[26px] bg-white border border-[#c6c6c6] flex items-center justify-end pr-[7px]">
        <div className="w-0 h-0 border-x-[4px] border-x-transparent border-t-[4px] border-t-[#555]" />
      </div>
      <div className="w-[31px] text-center text-[#999] font-bold leading-[8px] text-[10px]">⋮</div>
      <div className="w-[109px] h-[26px] bg-white border border-[#c6c6c6] flex items-center pl-[12px] text-[#bdbdbd]">
        <X size={14} />
        <svg width="14" height="14" viewBox="0 0 14 14" className="ml-[22px]" fill="none" stroke="#bdbdbd" strokeWidth="2">
          <path d="M1 7l4 5 8-11" />
        </svg>
        <span className="ml-[21px] italic text-[13px] font-bold text-[#555] font-['Liberation_Serif',serif]">fx</span>
      </div>
      <div className="ml-[4px] flex-1 h-[26px] bg-white border border-[#c6c6c6] flex items-center justify-end pr-[4px] text-[#555]">
        <ChevronDown size={11} />
      </div>
    </div>
  );
}

const columns = [
  { l: "A", w: "w-[13px]" },
  { l: "B", w: "w-[21px]" },
  { l: "C", w: "w-[22px]" },
  { l: "D", w: "w-[22px]" },
  { l: "E", w: "w-[22px]" },
  { l: "F", w: "w-[22px]" },
  { l: "G", w: "w-[760px]" },
  { l: "H", w: "w-[10px]" },
  { l: "I", w: "w-[152px]" },
  { l: "J", w: "w-[9px]" },
  { l: "M", w: "w-[72px]" },
];
const plainCols = [
  { l: "N", w: "w-[73px]" },
  { l: "O", w: "w-[72px]" },
  { l: "P", w: "w-[72px]" },
  { l: "Q", w: "w-[56px] pl-[14px]" },
];

function ColumnHeader() {
  return (
    <div className="h-[14px] flex bg-[#e6e6e6] shrink-0 text-[11px] leading-[14px] font-['Liberation_Sans',sans-serif]">
      <div className="w-[23px] flex justify-end items-end pr-[1px]">
        <div className="w-0 h-0 border-l-[9px] border-l-transparent border-b-[9px] border-b-[#b4b4b4]" />
      </div>
      {columns.map((c) => (
        <div key={c.l} className={`${c.w} shrink-0 bg-[#d2d2d2] border-r border-[#a8a8a8] text-center text-[#1f6b42]`}>
          {c.l}
        </div>
      ))}
      {plainCols.map((c) => (
        <div key={c.l} className={`${c.w} shrink-0 border-r border-[#c6c6c6] text-center text-[#444]`}>
          {c.l}
        </div>
      ))}
      <div className="ml-auto mt-[3px] w-[16px] h-[11px] bg-white border border-[#c6c6c6] flex items-center justify-center">
        <div className="w-0 h-0 border-x-[4px] border-x-transparent border-b-[4px] border-b-[#555]" />
      </div>
    </div>
  );
}

const rowHeads = [
  { n: 6, h: "h-[23px]", p: "items-end" },
  { n: 7, h: "h-[18px]" },
  { n: 8, h: "h-[18px]" },
  { n: 9, h: "h-[8px]", p: "items-end" },
  { n: 10, h: "h-[18px]" },
  { n: 11, h: "h-[18px]" },
  { n: 12, h: "h-[18px]" },
  { n: 13, h: "h-[18px]" },
  { n: 14, h: "h-[18px] border-b-2 border-b-[#f4f4f4]" },
  { n: 17, h: "h-[18px]" },
  { n: 18, h: "h-[18px]" },
  { n: 19, h: "h-[18px]" },
  { n: 20, h: "h-[18px]" },
  { n: 21, h: "h-[18px]" },
  { n: 22, h: "h-[18px] border-b-2 border-b-[#f4f4f4]" },
  { n: 25, h: "h-[18px]" },
  { n: 26, h: "h-[18px]" },
  { n: 27, h: "h-[18px]" },
  { n: 28, h: "h-[18px]" },
  { n: 31, h: "h-[18px] border-b-2 border-b-[#f4f4f4]" },
  { n: 34, h: "h-[18px]" },
  { n: 35, h: "h-[21px]", p: "items-end" },
  { n: 36, h: "h-[9px]", p: "items-end" },
  { n: 37, h: "h-[18px]" },
  { n: 38, h: "h-[18px]" },
  { n: 39, h: "h-[18px]" },
  { n: 40, h: "h-[18px]" },
  { n: 48, h: "h-[18px]", p: "items-start" },
];

function RowHeaders() {
  return (
    <div className="w-[23px] h-full overflow-hidden shrink-0 bg-[#e0e0e0] font-['Liberation_Sans',sans-serif] text-[11.5px] text-[#2e7d55]">
      {rowHeads.map((r) => (
        <div key={r.n} className={`${r.h} ${r.p ?? "items-center"} box-border border-b border-[#bdbdbd] flex justify-center overflow-hidden leading-[16px]`}>
          {r.n}
        </div>
      ))}
    </div>
  );
}

function SheetBox() {
  return <div className="w-[11px] h-[11px] bg-white border-t border-l border-[#666] shrink-0" />;
}

function AddPlus({ mt }: { mt: string }) {
  return (
    <div className={`${mt} h-[18px] pl-[4px] flex items-center`}>
      <FaPlus size={11} className="text-[#e8780e]" />
    </div>
  );
}

function Bullet({ children }: { children: React.ReactNode }) {
  return (
    <div className="h-[18px] leading-[18px] pl-[30px] flex whitespace-nowrap">
      <span className="w-[16px] text-[14px]">•</span>
      <span>{children}</span>
    </div>
  );
}

function Columns({ h, children }: { h: string; children: React.ReactNode }) {
  return (
    <div className={`${h} flex overflow-hidden`}>
      <div className="w-[878px] shrink-0 overflow-hidden">{children}</div>
      <div className="w-[162px] shrink-0 border-x border-black" />
    </div>
  );
}

function SheetText() {
  return (
    <div className="h-full flex-1 bg-[#c4c4c4] overflow-hidden font-['Liberation_Serif',serif] text-[14.35px] text-[#111]">
      <Columns h="h-[370px]">
        <div className="pl-[24px] h-[14px] leading-[14px]">following:</div>
        <div className="mt-[5px] pl-[24px] h-[18px] leading-[18px] font-bold tracking-[0.35px] text-[#b85c1a]">Name and date of inquiry:</div>
        <div className="mt-px ml-[21px] mr-[9px] h-[18px] bg-[#c4ab94]" />
        <div className="mt-[6px]">
          <Bullet>
            Obtained an understanding of the IT environment in tab <i>'IT Environment'</i> or provided link
          </Bullet>
          <Bullet>
            Obtained an understanding of the entity's IT systems considered relevant to the audit in tab <i>'In-Scope Systems'</i> or provided link
          </Bullet>
          <Bullet>
            Obtained an understanding of IT dependencies relevant to our audit in tab <i>'IT Dependencies'</i> or provided link
          </Bullet>
          <Bullet>
            <span className="tracking-[-0.07px]">
              Assessed the level of complexity of the entity's relevant IT systems in tab <i>'In-Scope Systems'</i> or provided link
            </span>
          </Bullet>
        </div>
        <AddPlus mt="mt-[2px]" />
        <div className="mt-[18px] flex whitespace-nowrap leading-[15px]">
          <span className="w-[24px] pl-[5px]">2.</span>
          <div>
            Identified and evaluated design effectiveness of relevant controls, including consideration of whether the controls are operated as prescribed by
            <br />
            individuals possessing the necessary authority and competence to perform the controls effectively, and evidenced implementation for each
            <br />
            relevant ITGC domain.
          </div>
        </div>
        <div className="mt-[7px] h-[18px] leading-[18px] flex items-center pl-[26px]">
          <SheetBox />
          <span className="ml-[9px] tracking-[-0.1px]">
            Evaluated in tab <i>'Control activities - ITGCs'</i> or provided link
          </span>
        </div>
        <AddPlus mt="mt-[2px]" />
        <div className="mt-[16px] h-[18px] leading-[18px] flex">
          <span className="w-[24px] pl-[5px]">3.</span>
          <span>Based on our understanding and evaluation of the entity's response to IT risks:</span>
        </div>
        <div className="mt-[2px] h-[17px] leading-[17px] flex items-center pl-[26px]">
          <SheetBox />
          <span className="ml-[9px]">No risks at the financial statement or assertion level identified, or</span>
        </div>
        <div className="h-[17px] leading-[17px] flex items-center pl-[26px]">
          <SheetBox />
          <span className="ml-[9px]">Risks at the financial statement or assertion level identified and have been added</span>
        </div>
        <AddPlus mt="mt-[2px]" />
      </Columns>
      <div className="h-[23px] w-[1040px] bg-[#a95a00] border-y border-[#222] flex items-center pl-[2px] font-bold tracking-[0.36px] text-[#e6d2bc] whitespace-nowrap">
        Develop plan for testing operating effectiveness of relevant Information Technology General Controls (ITGCs)
      </div>
      <Columns h="h-[91px]">
        <div className="mt-[6px] h-[18px] leading-[18px] flex">
          <span className="w-[24px] pl-[5px]">4.</span>
          <span className="tracking-[-0.06px]">Determined the planned approach for testing the operating effectiveness of ITGCs.</span>
        </div>
        <div className="pl-[24px] h-[17px] leading-[17px]">Checked those that apply:</div>
        <div className="mt-[3px] flex whitespace-nowrap leading-[15px] pl-[26px] tracking-[-0.15px]">
          <div className="mt-[4px]">
            <SheetBox />
          </div>
          <div className="ml-[9px]">
            Audit evidence is to be obtained from testing of ITGCs for one or more of the in-scope systems (as indicated in tab <i>'In-Scope Systems'</i> or provided
            <br />
            link)
          </div>
        </div>
        <div className="mt-[4px] flex whitespace-nowrap leading-[15px] pl-[26px] tracking-[-0.14px]">
          <div className="mt-[4px]">
            <SheetBox />
          </div>
          <div className="ml-[9px]">
            Audit evidence is not to be obtained from testing of ITGCs&nbsp; for one or more of the in-scope systems (as indicated in tab <i>'In-Scope Systems'</i> or
          </div>
        </div>
      </Columns>
    </div>
  );
}

function SheetArea() {
  return (
    <div className="h-[486px] flex shrink-0 bg-white">
      <RowHeaders />
      <div className="w-[1125px] shrink-0 h-full flex border-t-2 border-x-2 border-[#217346]">
        <div className="w-[10px] shrink-0 bg-white border-r-2 border-[#217346]" />
        <SheetText />
      </div>
      <div className="flex-1 border-r border-b border-[#c6c6c6]" />
      <div className="w-[16px] shrink-0 bg-[#e3e3e3] flex flex-col">
        <div className="h-[376px] mx-px mt-px bg-white border border-[#c6c6c6]" />
        <div className="mt-auto h-[14px] bg-white border border-[#c6c6c6] flex items-center justify-center">
          <div className="w-0 h-0 border-x-[4px] border-x-transparent border-t-[4px] border-t-[#555]" />
        </div>
      </div>
    </div>
  );
}

const sheetTabs = [
  { label: "IT Environment", w: "w-[114px]" },
  { label: "In-Scope Systems", w: "w-[126px]" },
  { label: "IT Dependencies", w: "w-[122px]" },
  { label: "Control activities - ITGCs", w: "w-[171px]" },
];

function SheetTabs() {
  return (
    <div className="h-[28px] bg-[#e6e6e6] border-t border-[#c6c6c6] flex items-center shrink-0 text-[12.2px]">
      <div className="w-[99px] pl-[26px] flex gap-[24px] text-[#c4c4c4]">
        <div className="w-0 h-0 border-y-[4px] border-y-transparent border-r-[4px] border-r-[#c4c4c4]" />
        <div className="w-0 h-0 border-y-[4px] border-y-transparent border-l-[4px] border-l-[#c4c4c4]" />
      </div>
      <div className="w-[140px] h-full bg-white border-b-2 border-[#217346] text-[#217346] font-semibold flex items-center justify-center whitespace-nowrap">
        Library Procedures
      </div>
      <div className="ml-[2px] flex items-center gap-[5px]">
        {sheetTabs.map((t) => (
          <div key={t.label} className={`${t.w} h-[22px] bg-[#e06c00] text-[#f5e3d0] flex items-center justify-center whitespace-nowrap`}>
            {t.label}
          </div>
        ))}
      </div>
      <div className="ml-[36px] w-[15px] h-[15px] rounded-full border border-[#777] flex items-center justify-center text-[#666]">
        <Plus size={10} />
      </div>
      <div className="ml-[20px] w-[4px] text-[#aaa] leading-none text-[11px]">⋮</div>
      <div className="ml-[13px] w-[14px] h-[14px] bg-white border border-[#b4b4b4] flex items-center justify-center">
        <div className="w-0 h-0 border-y-[4px] border-y-transparent border-r-[4px] border-r-[#555]" />
      </div>
      <div className="w-[477px] h-[14px] bg-white border-y border-r border-[#b4b4b4]" />
      <div className="ml-auto mr-[21px] w-[14px] h-[14px] bg-white border border-[#b4b4b4] flex items-center justify-center">
        <div className="w-0 h-0 border-y-[4px] border-y-transparent border-l-[4px] border-l-[#555]" />
      </div>
    </div>
  );
}

function StatusBar() {
  return (
    <div className="h-[21px] border-t border-[#c6c6c6] flex items-center shrink-0 text-[10.5px] text-[#444]">
      <div className="ml-[8px] w-[12px] h-[12px] border border-[#555] flex flex-col justify-evenly px-[2px]">
        <div className="h-px bg-[#555]" />
        <div className="h-px bg-[#555]" />
      </div>
      <svg width="16" height="15" viewBox="0 0 16 15" className="ml-[17px]" fill="none" stroke="#555">
        <path d="M8 0v6M5 3h6M10 9l5 5M15 9l-5 5M4 4a6 6 0 0 0 2 9" />
      </svg>
      <span className="ml-[4px]">Accessibility: Investigate</span>
      <span className="ml-auto text-[11px] whitespace-nowrap">Count: 37</span>
      <div className="ml-[21px] w-[39px] h-full bg-[#d2d2d2] flex items-center justify-center">
        <div className="w-[13px] h-[13px] border border-[#333] bg-[linear-gradient(#333_1px,transparent_1px),linear-gradient(90deg,#333_1px,transparent_1px)] bg-[length:4px_4px]" />
      </div>
      <div className="ml-[13px] w-[13px] h-[13px] border border-[#333] flex items-center justify-center">
        <div className="w-[7px] h-[7px] border-y border-[#333]" />
      </div>
      <div className="ml-[26px] w-[13px] h-[13px] border border-[#333] flex">
        <div className="w-[6px] h-[6px] border-r border-b border-[#333] ml-auto" />
      </div>
      <div className="ml-[22px] w-[7px] h-px bg-[#333]" />
      <div className="ml-[6px] w-[79px] h-px bg-[#aaa] relative mr-[15px]">
        <div className="absolute left-[44px] -top-[5px] w-[4px] h-[11px] bg-[#777]" />
      </div>
      <div className="w-[70px]" />
    </div>
  );
}

function ExcelWindow() {
  return (
    <div className="absolute left-[196px] top-[229px] w-[1438px] h-[758px] border border-[#7b7b7b] bg-[#f3f2f1] flex flex-col font-['Open_Sans',sans-serif] overflow-hidden">
      <TitleBar />
      <RibbonTabs />
      <Ribbon />
      <FormulaBar />
      <ColumnHeader />
      <SheetArea />
      <SheetTabs />
      <StatusBar />
    </div>
  );
}

function TroubleshootingPopup() {
  return (
    <div className="absolute left-[1635px] top-[721px] w-[273px] h-[307px] rounded-[2px] bg-[#3096b4] text-white text-[14px] leading-[18px] pl-[23px] pt-[15px] font-['Liberation_Sans',sans-serif] shadow-[0_0_6px_rgba(0,0,0,0.3)] overflow-hidden">
      <div className="whitespace-nowrap">
        <b>Troubleshooting Guidance</b>
        <br />
        This action may require you to
        <br />
        <b>save and close any open Microsoft</b>
        <br />
        <b>Word and Excel files</b> in order to
        <br />
        <u>install additional software</u> which is
        <br />
        necessary to open Aura Platinum
        <br />
        EGAs even when working online. If
        <br />
        your action does not complete, <u>click</u>
        <br />
        <u>this message to install the software</u>
        <br />
        <u>required to end open processes.</u>
        <br />
        Otherwise, you may dismiss this
        <br />
        message by checking the box below.
        <br />
        For assistance, contact your local
      </div>
      <X size={17} strokeWidth={4} className="absolute right-[10px] top-[15px]" />
      <div className="absolute left-0 top-[137px] w-[10px] h-[22px] rounded-r-full bg-white text-[#3096b4] text-[11px] font-bold leading-[22px]">i</div>
    </div>
  );
}

function Toast() {
  return (
    <div className="absolute left-[1540px] top-[967px] w-[364px] h-[61px] bg-gradient-to-r from-[#2e8fa5] to-[#087f98] flex items-center pl-[18px] text-white text-[15.5px] font-semibold font-['Open_Sans',sans-serif]">
      <div className="w-[15px] h-[15px] bg-white rounded-[3px] flex items-center justify-center">
        <AuraLogo size={12} />
      </div>
      <span className="ml-[14px]">EGA workpaper already open.</span>
    </div>
  );
}

export default function App() {
  return (
    <div className="relative w-[1920px] h-[1080px] overflow-hidden bg-white font-['Open_Sans',sans-serif]">
      <BrowserTabs />
      <AddressBar />
      <BookmarksBar />
      <AuraHeader />
      <MainNav />
      <SubNav />
      <PageBody />
      <Footer />
      <Taskbar />
      <ExcelWindow />
      <TroubleshootingPopup />
      <Toast />
    </div>
  );
}
